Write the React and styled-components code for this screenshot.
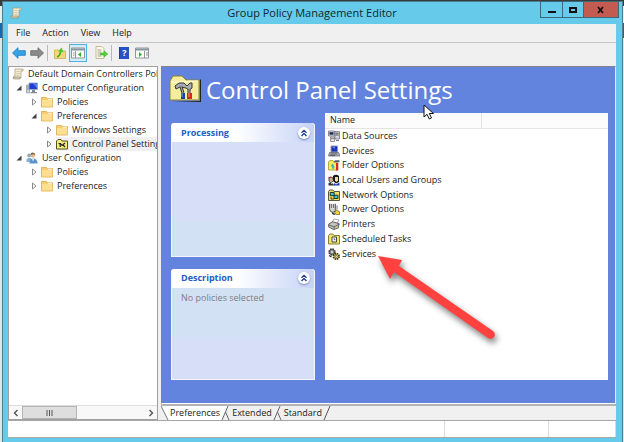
import styled, { createGlobalStyle } from "styled-components";

const tree = [
    { label: "Default Domain Controllers Policy", icon: "scroll", depth: 0 },
    { label: "Computer Configuration", icon: "computer", depth: 1, open: true },
    { label: "Policies", icon: "folder", depth: 2 },
    { label: "Preferences", icon: "folder", depth: 2, open: true },
    { label: "Windows Settings", icon: "folder", depth: 3 },
    { label: "Control Panel Settings", icon: "tools", depth: 3, selected: true },
    { label: "User Configuration", icon: "user", depth: 1, open: true },
    { label: "Policies", icon: "folder", depth: 2 },
    { label: "Preferences", icon: "folder", depth: 2 },
];

const settings = [
    { label: "Data Sources", icon: "data" },
    { label: "Devices", icon: "devices" },
    { label: "Folder Options", icon: "folderOptions" },
    { label: "Local Users and Groups", icon: "users" },
    { label: "Network Options", icon: "network" },
    { label: "Power Options", icon: "power" },
    { label: "Printers", icon: "printer" },
    { label: "Scheduled Tasks", icon: "tasks" },
    { label: "Services", icon: "services", marked: true },
];

const drawings = {
    scroll: (
        <>
            <path d="M3 1h8v2H9v7H2V8h1z" fill="#f3ecd2" stroke="#a39a80" strokeWidth=".7" />
            <path d="M9 1.2h2.3v2H9z" fill="#cbbf9c" />
            <path d="M1 9h7v2H1.6z" fill="#d8cda9" stroke="#8f876f" strokeWidth=".6" />
            <path d="M4.5 3.5h3M4.5 5.5h3M4.5 7.3h3" stroke="#c0b79a" strokeWidth=".7" />
        </>
    ),
    computer: (
        <>
            <path d="M.5 3h3v8h-3z" fill="#cdd3da" stroke="#8d949d" strokeWidth=".7" />
            <path d="M1 5h2M1 7h2" stroke="#5a6570" strokeWidth=".7" />
            <path d="M3 1h8.5v6.5H3z" fill="#1d3ed0" stroke="#9ba5bb" strokeWidth=".9" />
            <path d="M7 1.5h4v5z" fill="#4f80f2" />
            <path d="M6 8h3v2h2v1.2H4.5V10H6z" fill="#7f8894" />
        </>
    ),
    folder: (
        <>
            <path d="M.5 1.5h5l1 1.2h5V11H.5z" fill="#f3cf73" stroke="#d9ab4a" strokeWidth=".8" />
            <path d="M1 4h10.3v6.5H1z" fill="#fbdf92" />
            <path d="M7 2.8h4v1H7z" fill="#fff6d8" />
        </>
    ),
    tools: (
        <>
            <path d="M.5 3 2 1.5h3L6 3h5.5v8H.5z" fill="#f3ee7a" stroke="#57511d" strokeWidth="1" />
            <path d="M2.5 5.5h2l1.500 2L9 5M4 5.5l.3 3.500M7 7l2 2" stroke="#222" strokeWidth="1.200" fill="none" />
        </>
    ),
    user: (
        <>
            <circle cx="3.2" cy="3.4" r="1.9" fill="#8fa7bd" />
            <path d="M.5 10V7.5Q3 4.5 5.5 7v3z" fill="#8ab0d0" />
            <circle cx="6.8" cy="3.3" r="2.4" fill="#e4b98d" />
            <path d="M4.4 3Q5-.2 8 .9 9.4 1.6 9.2 3 7 1.6 4.4 3z" fill="#75604c" />
            <path d="M3.5 11.5q0-5 3.5-5.2 4.3.2 4.6 5.2z" fill="#5a92cf" />
            <path d="m6 6.5 1 3 1.2-3z" fill="#fff" />
        </>
    ),
    data: (
        <>
            <path d="M.5 1h6v5h-6zM7 1.5h4.5V9H7z" fill="#d5d7dc" stroke="#70737c" strokeWidth=".8" />
            <path d="M1.5 2.2h4v2.5h-4z" fill="#202a58" />
            <path d="M7.6 3.3h3M7.6 5h3" stroke="#333" strokeWidth=".8" />
            <path d="M2.5 7h4v4.5h-4z" fill="#eee" stroke="#666" strokeWidth=".7" />
            <path d="M3 8.7h3M8 10.5h3" stroke="#555" strokeWidth=".8" />
        </>
    ),
    devices: (
        <>
            <path d="M3 1h6.5v6H3z" fill="#1b30b5" stroke="#9298a5" strokeWidth="1" />
            <path d="M4 2h3v2z" fill="#628aff" />
            <path d="M1.5 7.5h9L12 11H.5z" fill="#b7bbc4" stroke="#50545e" strokeWidth=".7" />
            <path d="M2.5 9h7M2 10.3h5" stroke="#333" strokeWidth=".7" />
        </>
    ),
    folderOptions: (
        <>
            <path d="M.5 3 1.8 1.5h3L6 3h3v8H.5z" fill="#f7ef54" stroke="#a19728" strokeWidth=".8" />
            <path d="M5.500 3.500 7 1.200h4.500v2H7.500z" fill="#52616c" />
            <path d="M8 4h2.3v7.5H8z" fill="#d62b1d" />
            <path d="m3 6 2-1.5L6.5 8 5 11z" fill="#46b2c1" />
        </>
    ),
    users: (
        <>
            <path d="M5 2Q8-.6 11 2v6l-3 1.5L5 7z" fill="#171717" />
            <path d="M7 3h3v3.5L8.5 8 7 6.5z" fill="#f5dfa2" />
            <path d="M1 4Q3 1.8 5 4l.5 3L3 9 1 7z" fill="#c9b28b" stroke="#222" strokeWidth=".8" />
            <path d="M.5 3.5h2" stroke="#b51c31" strokeWidth="1.3" />
            <path d="M.5 11.5V9l3-1 3 3.5z" fill="#333" />
            <path d="m6 9 2 1.5 3.5-2v3H6z" fill="#1c3cba" />
            <path d="m2.8 8.5 1.2 1 1-1.5" stroke="#fff" fill="none" />
        </>
    ),
    network: (
        <>
            <path d="M.5 2.5 1.8 1h3L6 2.5h5.5v9H.5z" fill="#eee365" stroke="#4b4828" strokeWidth=".9" />
            <path d="M2.2 3.5h4v3.2h-4zM6 6.2h4v3.3H6z" fill="#31c6df" stroke="#111" strokeWidth=".8" />
            <path d="M3 8v2h3" stroke="#111" strokeWidth=".8" fill="none" />
        </>
    ),
    power: (
        <>
            <path d="M1.5.8v5Q2 9.5 5 9.3 8 9 7.4 5.8V.8" fill="#d8d8d2" stroke="#55554f" strokeWidth="1" />
            <path d="M3.3 1v4M5.6 1v4" stroke="#444" strokeWidth=".8" />
            <path d="M4.5 9.5q0 2 3 1.5" stroke="#222" strokeWidth="1.2" fill="none" />
            <path d="M9 2.5v4" stroke="#777" />
            <path d="m8.5 7 3 1.8v2.7h-3l-2-2z" fill="#edd737" stroke="#62571f" strokeWidth=".7" />
        </>
    ),
    printer: (
        <>
            <path d="m4 4 2-3 5 1-2 3.5z" fill="#fff" stroke="#888" strokeWidth=".7" />
            <path d="m.7 6 4-2.3 6.5 2-1 4.3-4.5 1.5L.7 9z" fill="#c5c5c0" stroke="#55554f" strokeWidth=".9" />
            <path d="m1 7 5 1.8 5-2.5M6 9v2.5" stroke="#4c4c4c" strokeWidth=".8" fill="none" />
            <path d="M7 9.8 9.5 9" stroke="#d8ce3f" />
        </>
    ),
    tasks: (
        <>
            <path d="M.5 2.5 1.8 1h3L6 2.5h5.5V11H.5z" fill="#eee769" stroke="#77702f" strokeWidth=".9" />
            <path d="M4 4h4.5v5H4z" fill="#fff" stroke="#32323a" strokeWidth=".9" />
            <path d="M6.2 5.2v1.5h1.3" stroke="#1f3f9c" strokeWidth=".8" fill="none" />
        </>
    ),
    services: (
        <>
            <circle cx="4" cy="4" r="2.8" fill="#bbb" stroke="#303030" strokeWidth="1.8" strokeDasharray="1.5 .7" />
            <circle cx="4" cy="4" r="2" fill="#ccc" stroke="#444" strokeWidth=".7" />
            <circle cx="8.3" cy="8.4" r="2.8" fill="#e5d437" stroke="#3b391c" strokeWidth="1.7" strokeDasharray="1.5 .7" />
            <circle cx="8.3" cy="8.4" r="1" fill="#fff" stroke="#444" strokeWidth=".7" />
            <path d="M1 7.5 3.5 9" stroke="#333" strokeWidth="1.3" />
        </>
    ),
};

function Icon({ name }) {
    return (
        <Glyph viewBox="0 0 12 12" aria-hidden="true">
            {drawings[name]}
        </Glyph>
    );
}

function ArrowIcon({ forward }) {
    return (
        <svg width="14" height="12" viewBox="0 0 14 12" aria-hidden="true">
            <path
                d={forward ? "M13.5 6 8 .7v3H.7v4.600H8v3z" : "M.5 6 6 .7v3h7.300v4.600H6v3z"}
                fill={forward ? "#8b8b8b" : "#35a3e6"}
                stroke={forward ? "#666" : "#1a78bc"}
                strokeWidth=".8"
            />
        </svg>
    );
}

function PaneIcon({ right }) {
    return (
        <svg width="14" height="12" viewBox="0 0 14 12" aria-hidden="true">
            <path d="M.5 1h13v10H.5z" fill="#fafafa" stroke="#8e959c" />
            <path d="M1 1.5h12v2H1z" fill="#8895a3" />
            <path d={right ? "M9.5 4v7M11 6h2M11 8h2" : "M4.5 4v7M2 6h1.5M2 8h1.5"} stroke="#8e959c" />
            <path d={right ? "M4 5v5l3-2.5z" : "M10 5v5L7 7.5z"} fill="#35ad2f" />
        </svg>
    );
}

function Expander({ open }) {
    return (
        <svg width="7" height="8" viewBox="0 0 7 8" aria-hidden="true">
            {open ? <path d="M5.5 1.5v5h-5z" fill="#404040" /> : <path d="M1.5 1v6L5 4z" fill="#fff" stroke="#8a8a8a" />}
        </svg>
    );
}

function Panel({ title, children, tall }) {
    return (
        <Card $tall={tall}>
            <CardHeader>
                <h2>{title}</h2>
                <Collapse aria-label={"Collapse " + title}>
                    <svg width="8" height="8" viewBox="0 0 8 8">
                        <path d="M1.5 3.8 4 1.3l2.5 2.5M1.5 7 4 4.5 6.5 7" fill="none" stroke="#1c3d94" strokeWidth="1.3" />
                    </svg>
                </Collapse>
            </CardHeader>
            <CardBody $tall={tall}>{children}</CardBody>
        </Card>
    );
}

function TabEdge({ left, right, leftFill, rightFill }) {
    return (
        <svg width={left && right ? 10 : 8} height="14" viewBox={left && right ? "0 0 10 14" : "0 0 8 14"} aria-hidden="true">
            {left && right && (
                <>
                    <path d="M0 0h7L1 14H0z" fill={leftFill} />
                    <path d="M7 0h3v14H8L4.5 6z" fill={rightFill} />
                    <path d="M7 0 1 14M4.5 6 8 14" stroke="#666" fill="none" />
                </>
            )}
            {left && !right && <path d="M7 0 1 14" stroke="#555" />}
            {right && !left && (
                <>
                    <path d="M0 0h8v14H7z" fill={rightFill} />
                    <path d="m0 0 7 14" stroke="#777" />
                </>
            )}
        </svg>
    );
}

export default function App() {
    return (
        <Desktop>
            <GlobalStyle />
            <Window>
                <TitleBar>
                    <Icon name="scroll" />
                    <h1>Group Policy Management Editor</h1>
                    <Caption>
                        <CaptionButton aria-label="Minimize">
                            <svg width="8" height="8"><path d="M0 5h8v2H0z" fill="#111" /></svg>
                        </CaptionButton>
                        <CaptionButton aria-label="Maximize">
                            <svg width="8" height="8"><path d="M1 2h6v4H1z" fill="none" stroke="#111" strokeWidth="2" /></svg>
                        </CaptionButton>
                        <CaptionButton $close aria-label="Close">
                            <svg width="8" height="8"><path d="m1 1 5 6M6 1 1 7" stroke="#111" strokeWidth="1.8" /></svg>
                        </CaptionButton>
                    </Caption>
                </TitleBar>
                <Frame>
                    <MenuBar>
                        <button>File</button>
                        <button>Action</button>
                        <button>View</button>
                        <button>Help</button>
                    </MenuBar>
                    <Toolbar>
                        <ToolButton aria-label="Back"><ArrowIcon /></ToolButton>
                        <ToolButton aria-label="Forward"><ArrowIcon forward /></ToolButton>
                        <Separator />
                        <ToolButton aria-label="Up one level">
                            <svg width="12" height="12" viewBox="0 0 12 12">
                                <path d="M.5 3h4l1 1h6v7.5H.5z" fill="#f3d77d" stroke="#d2ac4d" strokeWidth=".8" />
                                <path d="M3 10q3-1 3.5-5" stroke="#3cae24" strokeWidth="1.6" fill="none" />
                                <path d="M4 4.5 7.500.5l2 4.800z" fill="#56c52f" />
                            </svg>
                        </ToolButton>
                        <ToolButton $active aria-label="Show or hide console tree"><PaneIcon /></ToolButton>
                        <ToolButton aria-label="Export list">
                            <svg width="13" height="13" viewBox="0 0 13 13">
                                <path d="M1 .5h6l2 2v10H1z" fill="#fffbe8" stroke="#b6ac8a" strokeWidth=".8" />
                                <path d="M2.5 4h4M2.5 6h4M2.5 8h3M2.5 10h4" stroke="#8c8c82" strokeWidth=".8" />
                                <path d="M5.5 7H9V4.8L12.8 8 9 11V9H5.500z" fill="#55cf3c" stroke="#32a523" strokeWidth=".5" />
                            </svg>
                        </ToolButton>
                        <Separator />
                        <ToolButton aria-label="Help">
                            <HelpMark>?</HelpMark>
                        </ToolButton>
                        <ToolButton aria-label="Show or hide action pane"><PaneIcon right /></ToolButton>
                    </Toolbar>
                    <Content>
                        <TreePane>
                            <Tree role="tree" aria-label="Console tree">
                                {tree.map((item, i) => (
                                    <TreeItem key={i} role="treeitem" aria-level={item.depth + 1} aria-expanded={item.open} $depth={item.depth}>
                                        {item.depth > 0 && <Expander open={item.open} />}
                                        <TreeLabel $selected={item.selected}>
                                            <Icon name={item.icon} />
                                            <span>{item.label}</span>
                                        </TreeLabel>
                                    </TreeItem>
                                ))}
                            </Tree>
                            <ScrollBar>
                                <button aria-label="Scroll left">
                                    <svg width="6" height="8"><path d="M4.5 1 1.5 4l3 3" fill="none" stroke="#555" strokeWidth="1.4" /></svg>
                                </button>
                                <Thumb>
                                    <svg width="8" height="6"><path d="M1 0v6M3.5 0v6M6 0v6" stroke="#555" /></svg>
                                </Thumb>
                                <button aria-label="Scroll right">
                                    <svg width="6" height="8"><path d="m1.5 1 3 3-3 3" fill="none" stroke="#555" strokeWidth="1.4" /></svg>
                                </button>
                            </ScrollBar>
                        </TreePane>
                        <Details>
                            <BluePane>
                                <Heading>
                                    <svg width="32" height="28" viewBox="0 0 32 28" aria-hidden="true">
                                        <path d="M2 27h30V5l-1-1v22z" fill="#25241a" />
                                        <path d="M1 6 4 1h9l4 4h13v20H1z" fill="#f6ee9c" stroke="#88803c" />
                                        <path d="M2 7h14l3-1h10" stroke="#fffde0" fill="none" />
                                        <path d="m6 11 4-3h5l3 3 3-3h2v5l-3 2-3-2-6-1-4 2z" fill="#a8abb0" stroke="#33353a" />
                                        <path d="m12 12 2 6M20 14v4" stroke="#33353a" strokeWidth="3" />
                                        <path d="m12 12 2 6M20 14v4" stroke="#b4b6ba" />
                                        <path d="M12 18h4v6h-4z" fill="#1e3eae" />
                                        <path d="M18 18h5v6h-5z" fill="#cf2820" />
                                        <path d="M13 18v4M20 18v4" stroke="#fff" strokeOpacity=".5" />
                                    </svg>
                                    <h2>Control Panel Settings</h2>
                                    <Pointer viewBox="0 0 12 17" aria-hidden="true">
                                        <path d="M1 1v12l3-2.7L6.3 15l2.2-1-2.2-4.5h4.2z" fill="#fff" stroke="#111" />
                                    </Pointer>
                                </Heading>
                                <Columns>
                                    <Side>
                                        <Panel title="Processing" tall />
                                        <Panel title="Description">No policies selected</Panel>
                                    </Side>
                                    <ListBox>
                                        <Table>
                                            <thead>
                                                <tr>
                                                    <th>Name</th>
                                                    <th aria-label="Order" />
                                                </tr>
                                            </thead>
                                            <tbody>
                                                {settings.map((s) => (
                                                    <tr key={s.label}>
                                                        <td>
                                                            <Entry>
                                                                <Icon name={s.icon} />
                                                                {s.label}
                                                                {s.marked && (
                                                                    <RedArrow viewBox="0 0 124 92" aria-hidden="true">
                                                                        <path d="m2 2 24 4-3 6 94 65a4 4 0 0 1-5 7L18 18l-4 7z" fill="#ff4140" />
                                                                    </RedArrow>
                                                                )}
                                                            </Entry>
                                                        </td>
                                                        <td />
                                                    </tr>
                                                ))}
                                            </tbody>
                                        </Table>
                                    </ListBox>
                                </Columns>
                            </BluePane>
                            <Tabs>
                                <TabEdge right rightFill="#fff" />
                                <Tab $active>Preferences</Tab>
                                <TabEdge left right leftFill="#fff" rightFill="#f0f0f0" />
                                <Tab>Extended</Tab>
                                <TabEdge left right leftFill="#f0f0f0" rightFill="#f0f0f0" />
                                <Tab>Standard</Tab>
                                <TabEdge left />
                            </Tabs>
                        </Details>
                    </Content>
                    <StatusBar>
                        <span />
                        <span />
                        <span />
                    </StatusBar>
                </Frame>
            </Window>
        </Desktop>
    );
}

const GlobalStyle = createGlobalStyle`
    * {
        box-sizing: border-box;
    }
    body {
        margin: 0;
        font-family: "Open Sans", "Noto Sans", sans-serif;
        font-size: 9px;
        line-height: 14px;
        color: #1a1a1a;
    }
    button {
        font: inherit;
        color: inherit;
        padding: 0;
        border: 0;
        background: transparent;
    }
    h1, h2, ul {
        margin: 0;
        padding: 0;
        font-weight: 400;
    }
    svg {
        display: block;
        flex: none;
    }
`

const Desktop = styled.div`
    min-height: 100vh;
    display: flex;
    padding: 1px 1px 0 2px;
    background: linear-gradient(#3a3a3a 6px, #e8edf0 6px, #e8edf0 23px, #1766b5 23px, #1766b5 38px, #dfe6ea 38px);
`

const Window = styled.div`
    flex: 1;
    min-width: 0;
    display: flex;
    flex-direction: column;
    padding: 0 6px 4px 5px;
    background-color: #66cbea;
    border: 1px solid #4b7f90;
    border-bottom: 0;
`

const TitleBar = styled.header`
    position: relative;
    height: 22px;
    display: flex;
    align-items: center;
    padding: 0 14px 0 2px;
    h1 {
        flex: 1;
        text-align: center;
        font-size: 11px;
        line-height: 16px;
        color: #10272e;
    }
`

const Caption = styled.div`
    position: absolute;
    top: -1px;
    right: -3px;
    display: flex;
    border: 1px solid #356b7c;
`

const CaptionButton = styled.button`
    width: ${(p) => (p.$close ? 35 : 21)}px;
    height: 15px;
    display: flex;
    align-items: center;
    justify-content: center;
    background-color: ${(p) => (p.$close ? "#c35b50" : "transparent")};
    & + & {
        border-left: 1px solid #356b7c;
    }
`

const Frame = styled.div`
    flex: 1;
    display: flex;
    flex-direction: column;
    background-color: #f0f0f0;
`

const MenuBar = styled.nav`
    height: 19px;
    display: flex;
    align-items: center;
    gap: 12px;
    padding-left: 8px;
    border-bottom: 1px solid #c6c6c6;
`

const Toolbar = styled.div`
    height: 23px;
    display: flex;
    align-items: center;
    padding: 0 2px 4px;
`

const ToolButton = styled.button`
    width: 18px;
    height: 18px;
    display: flex;
    align-items: center;
    justify-content: center;
    border: 1px solid ${(p) => (p.$active ? "#4fb0e4" : "transparent")};
    background-color: ${(p) => (p.$active ? "#d3ecf9" : "transparent")};
    margin-right: ${(p) => (p.$active ? 5 : 0)}px;
`

const Separator = styled.span`
    width: 1px;
    height: 16px;
    margin: 0 3px 0 1px;
    background-color: #b9b9b9;
`

const HelpMark = styled.span`
    width: 10px;
    height: 12px;
    line-height: 12px;
    font-weight: 700;
    text-align: center;
    color: #fff;
    background-color: #2a50c4;
    border-left: 1px solid #1e3c9c;
`

const Content = styled.main`
    flex: 1;
    display: flex;
    gap: 3px;
    border-bottom: 1px solid #a6a6a6;
`

const TreePane = styled.aside`
    width: 150px;
    flex: none;
    display: flex;
    flex-direction: column;
    overflow: hidden;
    background-color: #fff;
    border: 1px solid #a0a0a0;
`

const Tree = styled.ul`
    flex: 1;
    list-style: none;
`

const TreeItem = styled.li`
    height: 14px;
    display: flex;
    align-items: center;
    gap: 3px;
    padding-left: ${(p) => (p.$depth ? p.$depth * 15 - 8 : 3)}px;
    white-space: nowrap;
`

const TreeLabel = styled.div`
    flex: 1;
    display: flex;
    align-items: center;
    gap: 4px;
    background-color: ${(p) => (p.$selected ? "#f0f0f0" : "transparent")};
`

const Glyph = styled.svg`
    width: 12px;
    height: 12px;
`

const ScrollBar = styled.div`
    height: 14px;
    display: flex;
    background-color: #f8f8f8;
    border-top: 1px solid #dcdcdc;
    button {
        width: 13px;
        display: flex;
        align-items: center;
        justify-content: center;
    }
`

const Thumb = styled.div`
    width: 55px;
    margin-right: auto;
    display: flex;
    align-items: center;
    justify-content: center;
    background-color: #dedede;
    border: 1px solid #b4b4b4;
`

const Details = styled.section`
    flex: 1;
    min-width: 0;
    display: flex;
    flex-direction: column;
`

const BluePane = styled.div`
    flex: 1;
    display: flex;
    flex-direction: column;
    padding: 8px 7px 23px 9px;
    background-color: #6284de;
    border: 1px solid #848484;
    border-right-color: #e6e9f4;
    border-bottom-color: #fff;
`

const Heading = styled.div`
    position: relative;
    height: 38px;
    display: flex;
    align-items: flex-start;
    gap: 5px;
    margin-left: -2px;
    color: #fff;
    h2 {
        font-size: 24px;
        line-height: 30px;
        white-space: nowrap;
    }
`

const Pointer = styled.svg`
    position: absolute;
    left: 254px;
    top: 29px;
    width: 12px;
    height: 17px;
`

const Columns = styled.div`
    flex: 1;
    display: flex;
    gap: 10px;
`

const Side = styled.div`
    width: 144px;
    flex: none;
    display: flex;
    flex-direction: column;
    gap: 12px;
    padding-top: 10px;
`

const Card = styled.section`
    flex: ${(p) => (p.$tall ? "6 0 0" : "5 0 0")};
    display: flex;
    flex-direction: column;
    border: 1px solid #f4f6fd;
    border-top: 0;
    border-radius: 3px 3px 0 0;
    background-color: #fff;
`

const CardHeader = styled.div`
    height: 19px;
    display: flex;
    align-items: center;
    justify-content: space-between;
    padding: 0 4px 0 9px;
    border-radius: 3px 3px 0 0;
    background: linear-gradient(90deg, #fff 45%, #c6d3f7);
    h2 {
        font-size: 9px;
        line-height: 14px;
        font-weight: 700;
        color: #215dc6;
    }
`

const Collapse = styled.button`
    width: 12px;
    height: 12px;
    display: flex;
    align-items: center;
    justify-content: center;
    border-radius: 50%;
    background-color: #fff;
    box-shadow: 0 1px 2px #7784b5;
`

const CardBody = styled.div`
    flex: 1;
    padding: 3px 9px;
    color: #808080;
    background: ${(p) => (p.$tall ? "linear-gradient(#d6dff7 70%, #d3e1f4 70%)" : "linear-gradient(#d3e1f4 54%, #d6dff7 54%)")};
`

const ListBox = styled.div`
    flex: 1;
    min-width: 0;
    background-color: #fff;
`

const Table = styled.table`
    width: 100%;
    height: 148px;
    table-layout: fixed;
    border-collapse: collapse;
    th, td {
        padding: 0;
        text-align: left;
        font-weight: 400;
    }
    th {
        height: 15px;
        padding-left: 5px;
        background-color: #fcfcfc;
        border-bottom: 1px solid #e4e4e4;
    }
    th:first-child {
        width: 156px;
        border-right: 1px solid #e4e4e4;
    }
`

const Entry = styled.div`
    position: relative;
    display: flex;
    align-items: center;
    gap: 2px;
    padding-left: 3px;
`

const RedArrow = styled.svg`
    position: absolute;
    left: 51px;
    top: 7px;
    width: 124px;
    height: 92px;
    filter: drop-shadow(2px 4px 3px rgba(0, 0, 0, 0.5));
`

const Tabs = styled.div`
    height: 16px;
    display: flex;
    border-top: 2px solid #b3b3b3;
`

const Tab = styled.button`
    padding: 0 1px;
    background-color: ${(p) => (p.$active ? "#fff" : "#f0f0f0")};
`

const StatusBar = styled.footer`
    height: 17px;
    display: flex;
    background-color: #fff;
    border-bottom: 1px solid #a6a6a6;
    span {
        flex: 437 0 0;
        border-right: 1px solid #dadada;
    }
    span + span {
        flex: 104 0 0;
    }
    span + span + span {
        flex: 66 0 0;
    }
`
